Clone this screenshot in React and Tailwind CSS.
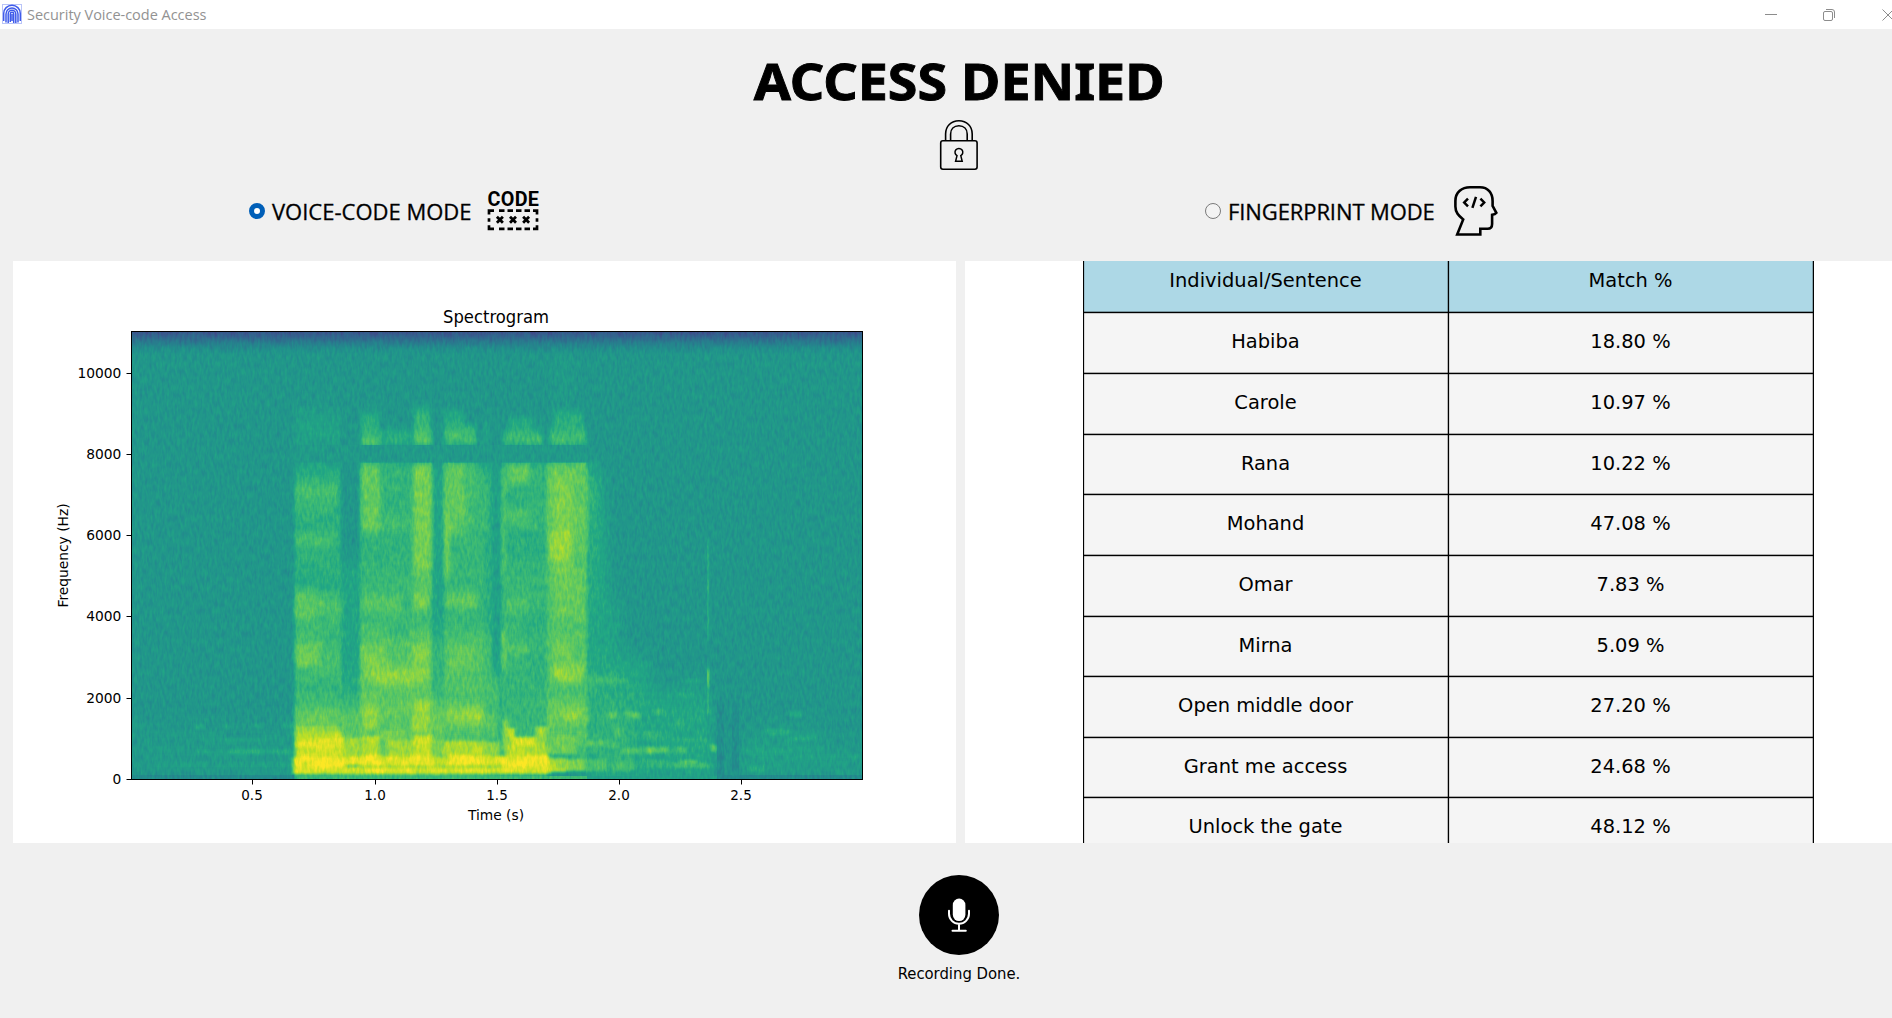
import React from "react";

const ROWS = [
  ["Habiba", "18.80 %", "h-[61px]"],
  ["Carole", "10.97 %", "h-[61px]"],
  ["Rana", "10.22 %", "h-[60px]"],
  ["Mohand", "47.08 %", "h-[61px]"],
  ["Omar", "7.83 %", "h-[61px]"],
  ["Mirna", "5.09 %", "h-[60px]"],
  ["Open middle door", "27.20 %", "h-[61px]"],
  ["Grant me access", "24.68 %", "h-[60px]"],
  ["Unlock the gate", "48.12 %", "h-[61px]"],
];

// Energy patches: [x, y, width, height, level 0..1]
const DECAY = [
  [575, 470, 26, 300, 0.66], [580, 520, 26, 250, 0.62], [590, 600, 30, 180, 0.59], [590, 660, 60, 115, 0.61],
  [620, 690, 92, 90, 0.6], [590, 700, 44, 75, 0.65], [742, 730, 80, 50, 0.57], [800, 748, 62, 30, 0.56],
  [135, 728, 160, 46, 0.545], [553, 345, 20, 60, 0.55],
];

const WIDE = [
  [295, 412, 46, 34, 0.58], [295, 464, 46, 130, 0.64], [295, 590, 46, 190, 0.69],
  [341, 560, 19, 120, 0.59], [341, 680, 19, 30, 0.63], [341, 705, 19, 74, 0.75],
  [360, 464, 72, 110, 0.65], [360, 570, 72, 60, 0.68], [360, 630, 72, 149, 0.75],
  [432, 464, 12, 170, 0.59], [432, 634, 12, 80, 0.66], [432, 700, 12, 79, 0.77],
  [444, 464, 40, 170, 0.67], [444, 634, 40, 145, 0.73],
  [484, 464, 10, 170, 0.63], [484, 634, 16, 145, 0.7],
  [492, 464, 8, 210, 0.57], [501, 464, 46, 100, 0.64], [501, 564, 46, 215, 0.67],
  [547, 464, 40, 290, 0.74],
];

const BURSTS = [
  [361, 430, 20, 18, 0.73], [361, 412, 18, 22, 0.63], [383, 430, 26, 16, 0.63],
  [413, 427, 19, 20, 0.74], [414, 408, 16, 22, 0.66], [444, 427, 32, 18, 0.71], [444, 412, 20, 18, 0.63],
  [484, 420, 5, 26, 0.6], [503, 432, 40, 14, 0.7], [508, 419, 26, 15, 0.63],
  [549, 429, 37, 17, 0.7], [553, 412, 30, 22, 0.64],
  [361, 463, 20, 70, 0.76], [366, 510, 12, 18, 0.79], [383, 464, 28, 30, 0.66], [383, 515, 28, 14, 0.7],
  [413, 463, 19, 108, 0.8], [413, 570, 18, 22, 0.75], [444, 463, 22, 70, 0.77], [464, 463, 14, 40, 0.7],
  [444, 515, 30, 12, 0.74], [445, 510, 4, 70, 0.84], [484, 475, 3, 60, 0.71],
  [502, 463, 4, 110, 0.75], [508, 463, 24, 22, 0.76], [530, 463, 14, 70, 0.66], [508, 510, 22, 14, 0.74],
  [547, 463, 40, 85, 0.76], [553, 475, 20, 100, 0.81], [550, 532, 20, 26, 0.86], [552, 570, 32, 50, 0.77],
  [295, 484, 42, 14, 0.71], [295, 500, 38, 12, 0.68], [295, 534, 40, 14, 0.7],
  [295, 592, 22, 26, 0.76], [313, 601, 30, 12, 0.72], [295, 642, 28, 24, 0.78], [320, 652, 20, 18, 0.71],
  [295, 575, 46, 12, 0.61], [325, 630, 18, 12, 0.65], [295, 683, 46, 10, 0.65],
  [362, 596, 40, 16, 0.75], [412, 594, 18, 16, 0.8], [362, 648, 28, 33, 0.8], [372, 670, 52, 14, 0.85],
  [413, 645, 16, 38, 0.83], [385, 648, 24, 10, 0.73], [388, 625, 20, 10, 0.65],
  [446, 594, 32, 14, 0.77], [448, 645, 26, 26, 0.77], [450, 615, 30, 10, 0.67],
  [502, 630, 4, 40, 0.8], [505, 596, 24, 18, 0.72], [524, 612, 22, 20, 0.63], [508, 640, 20, 16, 0.72],
  [530, 650, 14, 36, 0.64], [503, 680, 40, 10, 0.65], [505, 540, 38, 16, 0.63],
  [554, 640, 18, 20, 0.8], [552, 666, 32, 15, 0.86], [582, 676, 36, 8, 0.7], [550, 623, 36, 4, 0.7],
  [549, 686, 50, 6, 0.67], [549, 704, 40, 20, 0.78], [562, 707, 16, 12, 0.84],
  [295, 705, 46, 12, 0.74], [295, 716, 46, 10, 0.8], [363, 704, 15, 26, 0.85], [380, 706, 30, 8, 0.79], [412, 700, 19, 35, 0.85],
  [446, 706, 38, 20, 0.82], [462, 709, 20, 6, 0.88], [484, 714, 12, 16, 0.75],
];

const LOW = [
  [295, 726, 46, 6, 0.85], [295, 732, 48, 10, 0.9], [295, 742, 48, 7, 0.98], [318, 738, 26, 7, 0.97], [295, 747, 48, 11, 0.94],
  [343, 738, 18, 22, 0.87], [362, 736, 18, 22, 0.9], [381, 730, 26, 9, 0.8], [387, 740, 26, 17, 0.87],
  [413, 735, 19, 24, 0.92], [432, 740, 12, 18, 0.8], [444, 741, 42, 16, 0.89], [484, 742, 16, 18, 0.83],
  [503, 720, 5, 30, 0.86], [505, 728, 10, 9, 0.92], [510, 737, 28, 9, 0.96], [505, 746, 43, 12, 0.9], [536, 726, 11, 22, 0.87],
  [293, 757, 52, 10, 1.03], [345, 757, 16, 8, 0.96], [361, 755, 20, 11, 1.03], [381, 757, 32, 9, 0.97],
  [413, 755, 19, 11, 1.02], [432, 757, 16, 9, 0.92], [448, 755, 24, 11, 1.03], [472, 756, 30, 10, 0.96],
  [502, 756, 48, 11, 1.03], [293, 767, 257, 7, 0.96],
  [549, 736, 28, 18, 0.78], [549, 758, 18, 14, 0.88], [566, 759, 18, 12, 0.82],
  [584, 740, 22, 7, 0.73], [584, 759, 22, 12, 0.72],
];

const TAIL = [
  [608, 712, 9, 7, 0.77], [626, 712, 14, 6, 0.75], [614, 728, 8, 9, 0.73], [646, 747, 7, 7, 0.8],
  [654, 747, 16, 6, 0.73], [674, 747, 13, 6, 0.7], [698, 745, 6, 5, 0.66], [710, 744, 6, 8, 0.76],
  [680, 760, 18, 7, 0.76], [606, 742, 12, 6, 0.71], [622, 748, 20, 6, 0.72], [612, 761, 22, 10, 0.71],
  [640, 760, 30, 8, 0.65], [672, 763, 40, 5, 0.69], [645, 731, 12, 7, 0.67], [655, 709, 7, 7, 0.67],
  [676, 719, 7, 6, 0.66], [640, 738, 66, 3, 0.63], [600, 679, 30, 4, 0.67], [674, 693, 20, 4, 0.62],
  [685, 679, 16, 4, 0.62], [744, 749, 46, 5, 0.6], [765, 729, 26, 6, 0.62], [790, 711, 12, 6, 0.62],
  [800, 755, 60, 4, 0.59], [790, 736, 26, 5, 0.61], [748, 766, 16, 6, 0.62],
  [195, 724, 9, 5, 0.63], [221, 724, 7, 4, 0.61], [252, 724, 9, 4, 0.6], [283, 723, 10, 5, 0.63],
  [132, 723, 5, 5, 0.62], [192, 750, 100, 4, 0.58], [228, 749, 36, 5, 0.64], [277, 749, 16, 5, 0.63],
  [196, 738, 90, 3, 0.58], [148, 763, 144, 5, 0.57],
];

const gray = (v) => {
  const n = Math.min(255, Math.round(v * 255));
  return `rgb(${n},${n},${n})`;
};

function Patches({ items, filter }) {
  return (
    <g filter={filter}>
      {items.map(([x, y, w, h, v], i) => (
        <rect key={i} x={x} y={y} width={w} height={h} fill={gray(v)} />
      ))}
    </g>
  );
}

const BLURS = [["decay", "7 12"], ["soft", "1.5 9"], ["burst", "2 4.5"], ["low", "2 1.5"], ["fine", "0.7 3"]];
const Y_TICKS = [["10000", 373.5], ["8000", 454.5], ["6000", 535.5], ["4000", 616.5], ["2000", 698.5], ["0", 779.5]];
const X_TICKS = [["0.5", 252.5], ["1.0", 375.5], ["1.5", 497.5], ["2.0", 619.5], ["2.5", 741.5]];

function Spectrogram() {
  return (
    <svg viewBox="13 261 943 582" className="block h-[582px] w-[943px] font-['DejaVu_Sans',sans-serif]" fill="#000">
      <defs>
        {BLURS.map(([id, deviation]) => (
          <filter key={id} id={id} filterUnits="userSpaceOnUse" x="100" y="300" width="800" height="520" colorInterpolationFilters="sRGB">
            <feGaussianBlur stdDeviation={deviation} />
          </filter>
        ))}
        <filter id="viridis" filterUnits="userSpaceOnUse" x="132" y="332" width="730" height="447" colorInterpolationFilters="sRGB">
          <feTurbulence type="fractalNoise" baseFrequency="0.4 0.13" numOctaves="2" seed="7" />
          <feColorMatrix values="1 0 0 0 0  1 0 0 0 0  1 0 0 0 0  0 0 0 0 1" result="grain" />
          <feComposite in="SourceGraphic" in2="grain" operator="arithmetic" k1="0" k2="0.96" k3="0.16" k4="-0.06" result="grained" />
          <feTurbulence type="fractalNoise" baseFrequency="0.07 0.09" numOctaves="2" seed="3" />
          <feColorMatrix values="1 0 0 0 0  1 0 0 0 0  1 0 0 0 0  0 0 0 0 1" result="cloud" />
          <feComposite in="grained" in2="cloud" operator="arithmetic" k1="0.26" k2="0.87" k3="-0.13" k4="0.065" />
          <feComponentTransfer>
            <feFuncR type="table" tableValues="0.267 0.282 0.255 0.208 0.165 0.129 0.133 0.267 0.478 0.741 0.992" />
            <feFuncG type="table" tableValues="0.004 0.141 0.267 0.373 0.471 0.569 0.659 0.749 0.820 0.875 0.906" />
            <feFuncB type="table" tableValues="0.329 0.459 0.529 0.553 0.557 0.549 0.518 0.439 0.318 0.149 0.145" />
            <feFuncA type="linear" slope="0" intercept="1" />
          </feComponentTransfer>
        </filter>
        <linearGradient id="rolloff" x1="0" y1="0" x2="0" y2="1">
          <stop offset="0" stopColor={gray(0.25)} />
          <stop offset="0.3" stopColor={gray(0.32)} stopOpacity="0.85" />
          <stop offset="0.6" stopColor={gray(0.4)} stopOpacity="0.5" />
          <stop offset="1" stopColor={gray(0.5)} stopOpacity="0" />
        </linearGradient>
        <clipPath id="axes"><rect x="132" y="332" width="730" height="447" /></clipPath>
      </defs>

      <text x="443" y="323" fontSize="16.9" textLength="106" lengthAdjust="spacingAndGlyphs">Spectrogram</text>

      <g clipPath="url(#axes)">
        <g filter="url(#viridis)">
          <rect x="132" y="332" width="730" height="447" fill={gray(0.526)} />
          <Patches items={DECAY} filter="url(#decay)" />
          <Patches items={WIDE} filter="url(#soft)" />
          <Patches items={TAIL} filter="url(#low)" />
          <Patches items={BURSTS} filter="url(#burst)" />
          <Patches items={LOW} filter="url(#low)" />
          <rect x="290" y="445" width="300" height="17.5" fill={gray(0.543)} />
          <rect x="297" y="776" width="290" height="3" fill={gray(0.68)} />
          <rect x="587" y="776" width="130" height="3" fill={gray(0.57)} />
          <rect x="132" y="775" width="162" height="4" fill={gray(0.48)} />
          <rect x="717" y="775" width="145" height="4" fill={gray(0.48)} />
          <g filter="url(#fine)">
            <rect x="717" y="700" width="7" height="79" fill={gray(0.49)} />
            <rect x="732" y="705" width="7" height="74" fill={gray(0.49)} />
            <rect x="707" y="540" width="2.2" height="100" fill={gray(0.62)} />
            <rect x="706.8" y="668" width="2.8" height="18" fill={gray(0.74)} />
            <rect x="707" y="690" width="2.2" height="25" fill={gray(0.63)} />
          </g>
          <rect x="132" y="332" width="730" height="24" fill="url(#rolloff)" />
        </g>
      </g>
      <rect x="131.5" y="331.5" width="731" height="448" fill="none" stroke="#000" />

      {Y_TICKS.map(([label, y]) => (
        <g key={label}>
          <path d={`M126.5 ${y}H131`} stroke="#000" />
          <text x="121.3" y={y + 4.9} fontSize="13.8" textAnchor="end">{label}</text>
        </g>
      ))}
      {X_TICKS.map(([label, x]) => (
        <g key={label}>
          <path d={`M${x} 780V784.5`} stroke="#000" />
          <text x={x - 0.5} y="800" fontSize="13.5" textAnchor="middle">{label}</text>
        </g>
      ))}
      <text x="496" y="820" fontSize="13.8" textAnchor="middle">Time (s)</text>
      <text transform="translate(68 555.5) rotate(-90)" fontSize="13.8" textAnchor="middle">Frequency (Hz)</text>
    </svg>
  );
}

function FingerprintIcon() {
  return (
    <svg viewBox="0 0 20 20" className="-mt-px h-5 w-5" fill="none" stroke="#3f5bea" strokeWidth="1.5">
      <rect x=".5" y=".5" width="19" height="19" stroke="#b9c4f8" strokeWidth="1" />
      <path d="M1.7 17V9.5a8.3 8.3 0 0 1 16.6 0V17M4 18.5V10a6 6 0 0 1 12 0v8.5M6.2 19v-9a3.8 3.8 0 0 1 7.6 0v9M8.3 18v-8a1.7 1.7 0 0 1 3.4 0v9M10 10v7" />
    </svg>
  );
}

function LockIcon() {
  return (
    <svg viewBox="0 0 40 52" className="h-[52px] w-10" fill="none" stroke="#000" strokeWidth="1.6">
      <rect x="1.7" y="21.7" width="36.4" height="28.5" rx="2.2" />
      <path d="M6.6 21.5V15C6.6 7.4 12 1.8 19.9 1.8S33.2 7.4 33.2 15v6.5M11.6 21.5V15c0-5 3.3-8.3 8.3-8.3s8.3 3.3 8.3 8.3v6.5" />
      <path d="M18 36.7a3.9 3.9 0 1 1 3.8 0l1.4 5.6h-6.6z" strokeWidth="1.5" />
    </svg>
  );
}

function CodeIcon() {
  return (
    <svg viewBox="0 -4 52 50" className="h-[50px] w-[52px] overflow-visible" fill="#000">
      <text x="-0.6" y="16.4" fontSize="19.8" fontWeight="700" textLength="51.6" className="font-[Roboto,sans-serif]">CODE</text>
      <path d="M1 24.5V20.7H6M11 20.7h5.5M19.5 20.7H25M28 20.7h5.5M36.5 20.7H42M45 20.7h4V24.5M1 28.2v3.6M49 28.2v3.6M1 35.3v3.5H6M11 38.8h5.5M19.5 38.8H25M28 38.8h5.5M36.5 38.8H42M45 38.8h4V35.3" fill="none" stroke="#000" strokeWidth="2.7" />
      <path d="M8.9 26.8l6 6m0-6l-6 6M22 26.8l6 6m0-6l-6 6M35.1 26.8l6 6m0-6l-6 6" stroke="#000" strokeWidth="2.8" />
    </svg>
  );
}

function HeadIcon() {
  return (
    <svg viewBox="0 0 44 50" className="h-[50px] w-11" fill="none" stroke="#000" strokeWidth="2.6">
      <path d="M26.3 48.5H3.2L9.2 33.5C4.5 29.5 1.4 26.5 1.4 20.5V15C1.4 6 8 1.3 16 1.3h10C34 1.3 38.6 7 38.6 15v4.8l3.8 7c-1 1.4-2.5 1.8-4.3 2V38c0 3-1.6 4.8-4.5 4.8h-7.3z" />
      <path d="M14 12.6l-3.8 3.9 3.8 3.9M22 10.8l-3.6 11M26.4 12.6l3.8 3.9-3.8 3.9" strokeWidth="2.5" />
    </svg>
  );
}

function TableRow({ label, value, height, head }) {
  const tone = head ? "bg-[#add8e6]" : "bg-[#f5f5f5]";
  const edge = "flex items-center justify-center border-b border-black pr-[1px] pb-[2px] shadow-[inset_0_1px_0_rgba(0,0,0,0.18),inset_0_-1px_0_rgba(0,0,0,0.3),inset_-1px_0_0_rgba(0,0,0,0.25),inset_1px_0_0_rgba(0,0,0,0.12)]";
  return (
    <div className={`grid shrink-0 grid-cols-[366px_365px] ${height}`}>
      <div className={`${edge} ${tone} border-x`}>{label}</div>
      <div className={`${edge} ${tone} border-r`}>{value}</div>
    </div>
  );
}

export default function App() {
  return (
    <div className="h-[1018px] w-[1892px] overflow-hidden bg-[#f0f0f0] text-black">
      <div className="flex h-full w-[1918px] flex-col">
        <header className="flex h-[29px] shrink-0 items-center bg-white pl-[2px] text-[#929292]">
          <FingerprintIcon />
          <span className="ml-[5px] font-['Open_Sans',sans-serif] text-[14.5px] tracking-[-0.02px]">Security Voice-code Access</span>
          <svg viewBox="0 0 140 14" className="ml-auto mr-[23px] h-[14px] w-[140px]" fill="none" stroke="#8c8c8c" strokeWidth="1">
            <path d="M10 6.5h12" />
            <rect x="68.5" y="3.5" width="9" height="9" rx="1.5" />
            <path d="M71 1.5h6a2.5 2.5 0 0 1 2.5 2.5v6M127.5 1.5l11 11m0-11l-11 11" />
          </svg>
        </header>

        <section className="flex h-[232px] shrink-0 flex-col items-center">
          <h1 className="mt-[16px] flex h-[72px] scale-x-[1.075] items-center whitespace-nowrap font-['Noto_Sans',sans-serif] text-[50px] font-bold leading-none [-webkit-text-stroke:0.9px_black]">ACCESS DENIED</h1>
          <div className="mt-[2px]"><LockIcon /></div>
          <div className="mt-[10px] grid w-full grid-cols-[956px_1fr] font-['Open_Sans',sans-serif] text-[22px] font-medium [-webkit-text-stroke:0.3px_black]">
            <label className="flex h-[60px] items-center pl-[249px]">
              <span className="h-4 w-4 rounded-full border-[5px] border-[#005fb8] bg-white" />
              <span className="ml-[7px] w-[200px] whitespace-nowrap">VOICE-CODE MODE</span>
              <span className="ml-[16px] [-webkit-text-stroke:0]"><CodeIcon /></span>
            </label>
            <label className="flex h-[60px] items-center pl-[249px]">
              <span className="h-4 w-4 rounded-full border border-[#7a7a7a] bg-[#f3f3f3]" />
              <span className="ml-[7px] w-[208px] whitespace-nowrap tracking-[-0.1px]">FINGERPRINT MODE</span>
              <span className="ml-[18px]"><HeadIcon /></span>
            </label>
          </div>
        </section>

        <main className="flex h-[582px] shrink-0 gap-[9px] pl-[13px]">
          <div className="w-[943px] bg-white"><Spectrogram /></div>
          <div className="flex w-[940px] flex-col overflow-hidden bg-white pl-[118px] font-['DejaVu_Sans',sans-serif] text-[19.45px] leading-none">
            <div className="-mt-[9px] flex flex-col">
              <TableRow head label="Individual/Sentence" value="Match %" height="h-[61px]" />
              {ROWS.map(([label, value, height]) => (
                <TableRow key={label} label={label} value={value} height={height} />
              ))}
            </div>
          </div>
        </main>

        <footer className="flex flex-col items-center pt-8">
          <button className="flex h-20 w-20 items-center justify-center rounded-full bg-black" aria-label="Record">
            <svg viewBox="0 0 24 36" className="h-9 w-6" fill="none" stroke="#fff" strokeWidth="2">
              <rect x="5.8" y="1.6" width="12.6" height="22.4" rx="6.3" fill="#fff" stroke="none" />
              <path d="M2 13.8v3a10 10 0 0 0 20 0v-3M12 27v6.5M5.5 33.7h13.3" strokeLinecap="round" />
            </svg>
          </button>
          <p className="mt-[7px] font-['DejaVu_Sans_Condensed','DejaVu_Sans',sans-serif] text-[16.5px] leading-6">Recording Done.</p>
        </footer>
      </div>
    </div>
  );
}
